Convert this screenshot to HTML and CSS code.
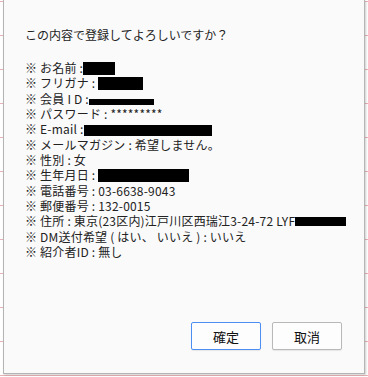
FILE: index.html
```html
<!DOCTYPE html>
<html lang="ja">
<head>
    <meta charset="UTF-8">
    <title>確認</title>
    <link rel="stylesheet" href="styles.css">
</head>
<body>
    <div class="dialog">
        <p class="message">この内容で登録してよろしいですか？</p>
        <ul class="items">
            <li>※ お名前 :<span class="mask m-name"></span></li>
            <li>※ フリガナ : <span class="mask m-kana"></span></li>
            <li>※ 会員 I D :<span class="mask m-id"></span></li>
            <li>※ パスワード : *********</li>
            <li>※ E-mail :<span class="mask m-mail"></span></li>
            <li>※ メールマガジン : 希望しません。</li>
            <li>※ 性別 : 女</li>
            <li>※ 生年月日 : <span class="mask m-birth"></span></li>
            <li>※ 電話番号 : 03-6638-9043</li>
            <li>※ 郵便番号 : 132-0015</li>
            <li>※ 住所 : 東京(23区内)江戸川区西瑞江3-24-72 LYF<span class="mask m-addr"></span></li>
            <li>※ DM送付希望 ( はい、 いいえ ) : いいえ</li>
            <li>※ 紹介者ID : 無し</li>
        </ul>
        <div class="buttons">
            <button class="btn btn-ok">確定</button>
            <button class="btn">取消</button>
        </div>
    </div>
</body>
</html>
```

FILE: styles.css
```css
html, body {
    margin: 0;
    padding: 0;
}
body {
    width: 368px;
    height: 377px;
    overflow: hidden;
    background-color: #fff;
    background-image: repeating-linear-gradient(to bottom, #e7b3b6 0, #e7b3b6 1px, transparent 1px, transparent 34px);
    background-position: 0 1px;
    font-family: "Noto Sans CJK JP", "Noto Sans", sans-serif;
    color: #222;
}
.dialog {
    box-sizing: border-box;
    width: 362px;
    height: 374px;
    margin-left: 3px;
    padding: 27px 0 0 21px;
    background: #fafafa;
    border: 1px solid #b4b4b4;
    border-top: none;
    box-shadow: 1px 1px 2px rgba(0, 0, 0, 0.2);
    display: flex;
    flex-direction: column;
    font-size: 12px;
}
.message {
    margin: 0 0 18px;
    line-height: 15px;
}
.items {
    list-style: none;
    margin: 0;
    padding: 0;
    line-height: 15.33px;
    letter-spacing: 0.2px;
}
.mask {
    display: inline-block;
    background: #000;
    vertical-align: -2px;
    height: 13px;
}
.m-name { width: 32px; }
.m-kana { width: 45px; }
.m-id { width: 65px; height: 6px; vertical-align: -1px; }
.m-mail { width: 128px; height: 11px; }
.m-birth { width: 91px; }
.m-addr { width: 51px; height: 9px; vertical-align: 0; }
.buttons {
    margin-top: auto;
    margin-bottom: 23px;
    padding-right: 22px;
    display: flex;
    justify-content: flex-end;
    gap: 11px;
}
.btn {
    box-sizing: border-box;
    width: 70px;
    height: 28px;
    background: #fdfdfd;
    border: 1px solid #b8b8b8;
    border-radius: 2px;
    font-family: "Noto Sans CJK JP", sans-serif;
    font-size: 13px;
    color: #111;
    padding: 0;
    box-shadow: 0 1px 1px rgba(0, 0, 0, 0.08);
}
.btn-ok {
    border-color: #4d8ef5;
}
```
